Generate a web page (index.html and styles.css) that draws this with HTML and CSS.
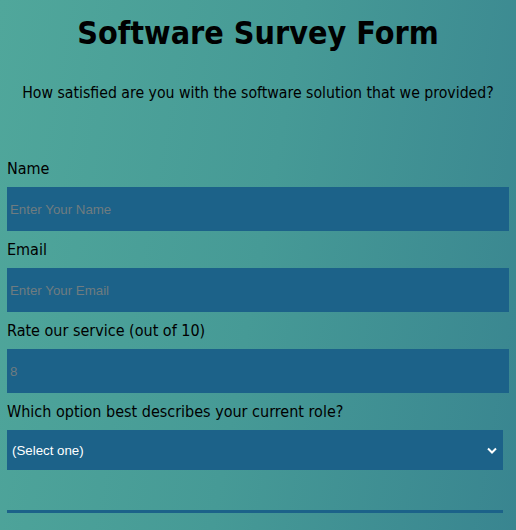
FILE: index.html
```html
<!DOCTYPE html>
<html lang="en">
<head>
<meta charset="utf-8">
<title>Software Survey Form</title>
<link rel="stylesheet" href="styles.css">
</head>
<body>
<h1 class="title">Software Survey Form</h1>
<p class="description">How satisfied are you with the software solution that we provided?</p>
<form class="survey">
  <label class="field-label" for="name">Name</label>
  <input class="field" id="name" type="text" placeholder="Enter Your Name">
  <label class="field-label" for="email">Email</label>
  <input class="field" id="email" type="email" placeholder="Enter Your Email">
  <label class="field-label" for="rate">Rate our service (out of 10)</label>
  <input class="field" id="rate" type="number" placeholder="8">
  <label class="field-label" for="role">Which option best describes your current role?</label>
  <div class="select-wrap">
    <select class="select" id="role">
      <option>(Select one)</option>
    </select>
    <svg class="chev" width="10" height="7" viewBox="0 0 10 7"><path d="M1 1.5 L5 5.5 L9 1.5" fill="none" stroke="#fff" stroke-width="2"/></svg>
  </div>
  <div class="divider"></div>
</form>
</body>
</html>
```
FILE: styles.css
```css
html, body {
  margin: 0;
  padding: 0;
  height: 100%;
}
body {
  background: linear-gradient(100deg, #50a79b 0%, #469a96 50%, #398590 100%);
  font-family: "DejaVu Sans Condensed", "DejaVu Sans", sans-serif;
  color: #000;
  overflow: hidden;
}
.title {
  margin: 14px 0 0;
  text-align: center;
  font-size: 32px;
  font-weight: bold;
  line-height: 38px;
}
.description {
  margin: 31px 0 0;
  text-align: center;
  font-size: 15.7px;
  line-height: 20px;
}
.survey {
  display: flex;
  flex-direction: column;
  padding: 0 7px;
  margin-top: 56px;
}
.field-label {
  font-size: 16px;
  line-height: 20px;
  margin-bottom: 8px;
}
.field {
  box-sizing: border-box;
  height: 44px;
  width: 100%;
  border: none;
  background: #1c6289;
  padding: 0 3px;
  margin-bottom: 9px;
  font-family: "Liberation Sans", Arial, sans-serif;
  font-size: 13.3px;
  color: #fff;
  outline: none;
}
.field::placeholder {
  color: #6f7c80;
}
.select-wrap {
  position: relative;
  width: 496px;
  height: 40px;
}
.select {
  appearance: none;
  -webkit-appearance: none;
  box-sizing: border-box;
  width: 100%;
  height: 40px;
  border: none;
  border-radius: 0;
  background: #1c6289;
  color: #fff;
  padding: 0 5px;
  font-family: "Liberation Sans", Arial, sans-serif;
  font-size: 13.3px;
}
.chev {
  position: absolute;
  right: 6px;
  top: 17px;
  pointer-events: none;
}
.divider {
  width: 496px;
  height: 3px;
  background: #1c6289;
  margin-top: 40px;
}
```
